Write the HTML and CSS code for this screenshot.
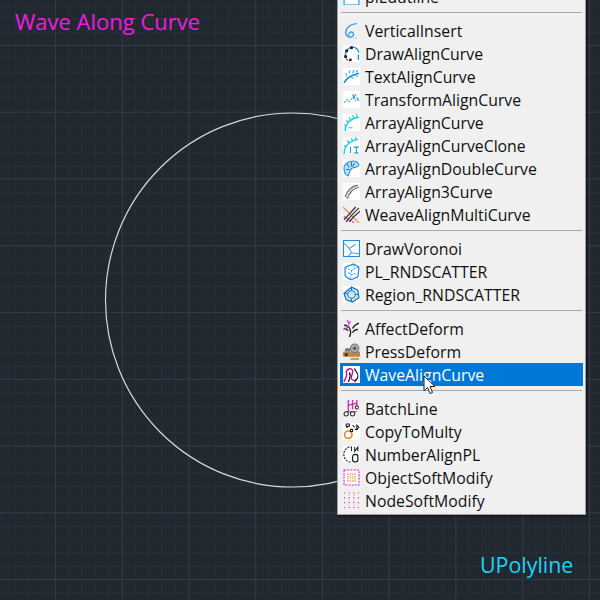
FILE: index.html
```html
<!DOCTYPE html>
<html lang="en">
<head>
<meta charset="utf-8">
<title>Wave Along Curve</title>
<link rel="stylesheet" href="styles.css">
</head>
<body>
<main class="canvas">
  <h1 class="title">Wave Along Curve</h1>
  <svg class="curve" viewBox="0 0 400 400"><circle cx="199.500" cy="200" r="187" fill="none" stroke="#d8dadc" stroke-width="1.200"/></svg>
  <p class="label">UPolyline</p>
  <nav class="menu">
    <div class="row"><span class="ico"><svg viewBox="0 0 16 16"><rect x="1" y="8" width="14" height="8" fill="#fff" stroke="#1b8fe0"/></svg></span><span>plEdutline</span></div>
    <hr class="sep">
    <div class="row"><span class="ico"><svg viewBox="0 0 16 16"><path d="M13 1.500C8 1.500 3 5 2.500 9.500c-.4 3.500 4 6 6.500 4 2-1.800.5-4.500-2-4-1.500.4-2 2-1 3" fill="none" stroke="#2a9be0" stroke-width="1.200"/><path d="M10 15h3" stroke="#9fd0f0"/></svg></span><span>VerticalInsert</span></div>
    <div class="row"><span class="ico ico-w"><svg viewBox="0 0 16 16"><path d="M2 10C2 5 6 2 9 2s5 2 6 5" fill="none" stroke="#1b8fe0" stroke-width="1.300"/><path d="M2 10c1 3 2 5 4 5" fill="none" stroke="#222" stroke-dasharray="2 1"/><circle cx="3.500" cy="5.500" r="1.500" fill="#222"/><circle cx="2.500" cy="11" r="1.500" fill="#222"/><circle cx="8" cy="2.500" r="1.500" fill="#222"/><circle cx="7" cy="14" r="1.300" fill="#222"/><path d="M14.500 9v5" stroke="#1b8fe0" stroke-width="1.300"/></svg></span><span>DrawAlignCurve</span></div>
    <div class="row"><span class="ico ico-w"><svg viewBox="0 0 16 16"><path d="M1 14C3 9 8 7 15 5" fill="none" stroke="#1b8fe0" stroke-width="1.500"/><path d="M3 8V5M6 5V2M9 5l1-3M12 4l2-2M8 9l2 1M12 7l2 1" stroke="#33a5ee"/></svg></span><span>TextAlignCurve</span></div>
    <div class="row"><span class="ico ico-w"><svg viewBox="0 0 16 16"><path d="M1 11l3-3 2 2 3-4 3 3 3-1" fill="none" stroke="#48a8ea" stroke-dasharray="2 1"/><path d="M9 3l2 4M12 3l-2 4M13 6l2 3" stroke="#2a90d8"/></svg></span><span>TransformAlignCurve</span></div>
    <div class="row"><span class="ico ico-w"><svg viewBox="0 0 16 16"><path d="M2 16C2 9 7 4 15 3" fill="none" stroke="#10d8e8" stroke-width="1.500"/><path d="M3 11l-2-1M5 8L3 6M7 6L6 3M10 4l-1-3M13 3V0M5 13h4" stroke="#10c8e0"/></svg></span><span>ArrayAlignCurve</span></div>
    <div class="row"><span class="ico ico-w"><svg viewBox="0 0 16 16"><path d="M1 16C1 9 6 4 14 2" fill="none" stroke="#10d8e8" stroke-width="1.300"/><path d="M3 10L1 8M6 6L4 3M9 4L8 1M12 3V0" stroke="#10c8e0"/><path d="M7 9.500v5.500M10 9.500h5M10 15h5M12.500 9.500V15" fill="none" stroke="#10a0c0"/></svg></span><span>ArrayAlignCurveClone</span></div>
    <div class="row"><span class="ico ico-w"><svg viewBox="0 0 16 16"><path d="M1 8c0-5 5-7 9-7s5 3 5 4c-2 3-4 1-7 3-2 2-2 4-3 7C2 14 1 11 1 8z" fill="#bfe2f7" stroke="#1b8fe0"/><path d="M4 4l2 3M8 2v4M3 9h3M11 3l-2 3" stroke="#1b6fc0"/></svg></span><span>ArrayAlignDoubleCurve</span></div>
    <div class="row"><span class="ico ico-w"><svg viewBox="0 0 16 16"><path d="M2 13C4 7 8 3 14 2" fill="none" stroke="#666"/><path d="M4 15C6 9 10 5 15 4" fill="none" stroke="#666"/><path d="M3 14C5 8 9 4 14 3" fill="none" stroke="#bbb" stroke-width="1.400" stroke-dasharray="2 1"/></svg></span><span>ArrayAlign3Curve</span></div>
    <div class="row"><span class="ico"><svg viewBox="0 0 16 16"><path d="M0 1l15 15" stroke="#d89a50" stroke-width="1.200"/><path d="M1 10l10 6" stroke="#f020d0" stroke-width="1.200" stroke-dasharray="2 1"/><path d="M3 15C7 10 10 6 15 2M6 15C9 11 12 8 16 5M1 13C5 9 8 5 12 1" fill="none" stroke="#333" stroke-width="1.200"/></svg></span><span>WeaveAlignMultiCurve</span></div>
    <hr class="sep">
    <div class="row"><span class="ico ico-w"><svg viewBox="0 0 16 16"><rect x=".5" y=".5" width="15" height="15" fill="none" stroke="#1b8fe0"/><path d="M1 3l5 5 6-4M6 8l2 4 7 1M8 12l-3 3" fill="none" stroke="#48a8ea"/></svg></span><span>DrawVoronoi</span></div>
    <div class="row"><span class="ico ico-w"><svg viewBox="0 0 16 16"><path d="M2 4l8-3 5 3-1 9-7 3-5-4z" fill="none" stroke="#1b8fe0" stroke-width="1.200"/><path d="M2 4l6 3 6-3M8 7l-1 9M5 9l3 2 4-1M10 2l1 4" fill="none" stroke="#48a8ea" stroke-dasharray="2 1"/></svg></span><span>PL_RNDSCATTER</span></div>
    <div class="row"><span class="ico ico-w"><svg viewBox="0 0 16 16"><path d="M8 1l6 3 1 7-6 4-6-2-2-6z" fill="#cfe8f8" stroke="#1b78c0" stroke-width="1.200"/><circle cx="8" cy="8" r="3.500" fill="none" stroke="#1b78c0"/><path d="M8 1v3M8 12v3M1 7h3M12 8h3" stroke="#1b78c0"/></svg></span><span>Region_RNDSCATTER</span></div>
    <hr class="sep">
    <div class="row"><span class="ico"><svg viewBox="0 0 16 16"><path d="M1 5c4 0 5 2 6 5 .5 2 0 4-1 6M15 3c-3 1-5 3-6 5M14 9c-2 0-4 1-5 3M1 8c2 0 3 1 4 2" fill="none" stroke="#222" stroke-width="1.300"/><path d="M4 0l2 4M0 9l6-3M7 1L5 5" stroke="#f020d0"/></svg></span><span>AffectDeform</span></div>
    <div class="row"><span class="ico"><svg viewBox="0 0 16 16"><rect x="0" y="8" width="16" height="5" rx="1" fill="#b8864a"/><circle cx="11" cy="5" r="4" fill="#aaa" stroke="#777"/><circle cx="11" cy="5" r="1.500" fill="#555"/><rect x="2" y="5" width="5" height="3" fill="#777"/><circle cx="3" cy="11" r="1.500" fill="#333"/><path d="M7 14h8v2H7z" fill="#d89a50"/></svg></span><span>PressDeform</span></div>
    <div class="row active"><span class="ico ico-w"><svg viewBox="0 0 16 16"><path d="M1 15c1-4 4-5 2-10 2-3 5-3 6-1 1 3-2 5-1 8 1 2 4 2 5 0" fill="none" stroke="#c01090" stroke-width="1.300"/><path d="M5 15c1-3 3-5 1-9M11 2c0 3 4 5 3 8 0 2-2 3-3 5" fill="none" stroke="#222" stroke-width="1.200"/></svg></span><span>WaveAlignCurve</span></div>
    <hr class="sep">
    <div class="row"><span class="ico"><svg viewBox="0 0 16 16"><path d="M5 0v11M9 0v9M13 0v7" stroke="#f020d0" stroke-width="1.300"/><path d="M3 11h10M5 5l8-2" stroke="#555"/><circle cx="3" cy="13" r="2" fill="#fff" stroke="#333"/><circle cx="9" cy="13" r="2" fill="#fff" stroke="#333"/><circle cx="13" cy="7" r="1.500" fill="#fff" stroke="#333"/></svg></span><span>BatchLine</span></div>
    <div class="row"><span class="ico ico-w"><svg viewBox="0 0 16 16"><circle cx="5" cy="11" r="3.500" fill="none" stroke="#e08a20" stroke-width="1.500"/><path d="M3 1h3v2H3zM3 4h2M9 2l2 2M13 2l2 2-2 2zM7 6h2v2H7zM11 6h3" stroke="#222" fill="none"/></svg></span><span>CopyToMulty</span></div>
    <div class="row"><span class="ico ico-w"><svg viewBox="0 0 16 16"><path d="M6 1C2 2 0 6 1 10c1 3 3 5 6 5" fill="none" stroke="#222" stroke-dasharray="2 1"/><path d="M7 1h1v4M11 1v4l3-4v4" fill="none" stroke="#222"/><rect x="9" y="8" width="5" height="7" rx="2" fill="none" stroke="#222" stroke-width="1.200"/></svg></span><span>NumberAlignPL</span></div>
    <div class="row"><span class="ico"><svg viewBox="0 0 16 16"><rect x="1" y="1" width="14" height="14" fill="#fff" stroke="#e020d8" stroke-dasharray="2 1"/><path d="M4 4h8v8H4z" fill="#e8b070"/><path d="M4 6h8M4 8h8M4 10h8M6 4v8M8 4v8M10 4v8" stroke="#fff" stroke-width=".8"/></svg></span><span>ObjectSoftModify</span></div>
    <div class="row"><span class="ico"><svg viewBox="0 0 16 16"><path d="M1 1h14M1 5.500h14M1 10h14M1 14.500h14" stroke="#e020d8" stroke-dasharray="1 3.330"/><path d="M5 3h6M5 8h6M5 12.500h6" stroke="#e8a060" stroke-dasharray="1 4"/></svg></span><span>NodeSoftModify</span></div>
  </nav>
  <svg class="cursor" viewBox="0 0 14 20"><path d="M1 1v15l3.500-3.500 2.500 6 2.500-1-2.500-6h5z" fill="#fff" stroke="#222"/></svg>
</main>
</body>
</html>
```

FILE: styles.css
```css
* { box-sizing: border-box; }
html, body { margin: 0; padding: 0; }
body { width: 600px; height: 600px; overflow: hidden; background: #212830; }
.canvas {
  position: relative;
  width: 600px;
  height: 600px;
  overflow: hidden;
  font-family: "Open Sans", "Noto Sans", sans-serif;
  background-color: #212830;
  background-image:
    linear-gradient(to right, #333a45 1px, transparent 1px),
    linear-gradient(to bottom, #333a45 1px, transparent 1px),
    linear-gradient(to right, #272e37 1px, transparent 1px),
    linear-gradient(to bottom, #272e37 1px, transparent 1px);
  background-size: 66.75px 66.75px, 66.75px 66.75px, 13.35px 13.35px, 13.35px 13.35px;
  background-position: 55px 45px, 55px 45px, 1.6px 5px, 1.6px 5px;
}
.title {
  position: absolute;
  left: 15px;
  top: 6px;
  margin: 0;
  font-size: 22px;
  line-height: 30px;
  font-weight: 400;
  color: #f01ce0;
}
.label {
  position: absolute;
  left: 480px;
  top: 550px;
  margin: 0;
  font-size: 21.400px;
  line-height: 30px;
  color: #1ed4f5;
}
.curve { position: absolute; left: 93px; top: 100px; width: 400px; height: 400px; }
.menu {
  position: absolute;
  left: 337px;
  top: -16px;
  width: 249px;
  padding: 0 2px 2px;
  display: flex;
  flex-direction: column;
  background: #f0f0f0;
  border: 1px solid #a0a0a0;
  box-shadow: 1px 1px 2px rgba(0, 0, 0, .6);
  font-size: 15.800px;
  color: #111;
}
.row {
  display: flex;
  align-items: center;
  gap: 5px;
  height: 23px;
  padding-left: 3px;
  white-space: nowrap;
}
.row.active { background: #0078d7; color: #fff; }
.ico { flex: none; width: 17px; height: 17px; display: flex; }
.ico svg { width: 17px; height: 17px; display: block; }
.ico-w { background: #fff; }
.sep {
  width: 241px;
  height: 1px;
  margin: 4px 0 6px;
  border: 0;
  background: #a8a8a8;
  align-self: center;
}
.cursor { position: absolute; left: 423px; top: 375px; width: 14px; height: 20px; }
```
